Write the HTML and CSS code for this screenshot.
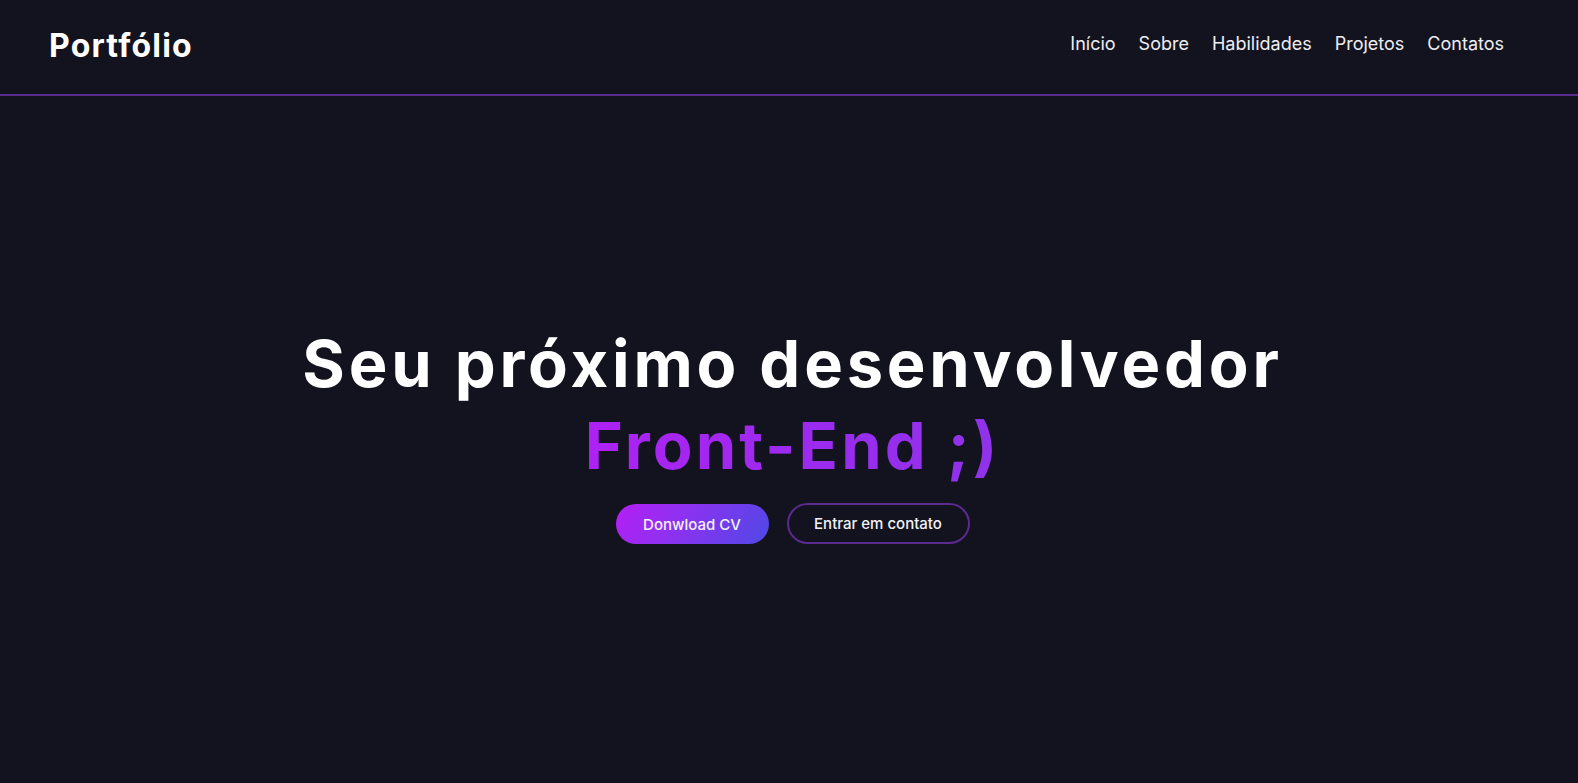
FILE: index.html
```html
<!DOCTYPE html>
<html lang="pt-BR">
<head>
<meta charset="utf-8">
<title>Portfólio</title>
<link rel="stylesheet" href="styles.css">
</head>
<body>
<header class="header">
  <a class="logo" href="#">Portfólio</a>
  <nav class="nav">
    <a href="#">Início</a>
    <a href="#">Sobre</a>
    <a href="#">Habilidades</a>
    <a href="#">Projetos</a>
    <a href="#">Contatos</a>
  </nav>
</header>
<main class="hero">
  <h1 class="title">Seu próximo desenvolvedor<br><span class="accent">Front-End ;)</span></h1>
  <div class="actions">
    <a class="btn btn-fill" href="#">Donwload CV</a>
    <a class="btn btn-outline" href="#">Entrar em contato</a>
  </div>
</main>
</body>
</html>
```

FILE: styles.css
```css
* { box-sizing: border-box; }
html, body { margin: 0; padding: 0; }
body {
  background: #13131f;
  color: #fff;
  font-family: "Inter", "Liberation Sans", sans-serif;
  min-height: 100vh;
}
a { text-decoration: none; color: inherit; }

.header {
  display: flex;
  justify-content: space-between;
  align-items: center;
  height: 96px;
  padding: 0 74px 0 49px;
  border-bottom: 2px solid #5b2a8f;
}
.logo {
  font-weight: 700;
  font-size: 32px;
  letter-spacing: 1.2px;
  color: #fff;
  margin-top: -4px;
}
.nav {
  display: flex;
  gap: 23px;
  margin-top: -8px;
}
.nav a {
  font-size: 18px;
  font-weight: 400;
  color: #eeeef2;
}

.hero {
  display: flex;
  flex-direction: column;
  align-items: center;
  padding-top: 227px;
  padding-left: 7px;
}
.title {
  margin: 0;
  text-align: center;
  font-size: 65px;
  line-height: 82px;
  font-weight: 700;
  letter-spacing: 3.8px;
}
.accent {
  letter-spacing: 3.1px;
  background: linear-gradient(90deg, #ad22f3 0%, #9a2cee 60%, #8f33ea 100%);
  -webkit-background-clip: text;
  background-clip: text;
  color: transparent;
}
.actions {
  display: flex;
  gap: 18px;
  margin-top: 17px;
}
.btn {
  display: inline-flex;
  align-items: center;
  justify-content: center;
  height: 40px;
  border-radius: 20px;
  font-size: 15px;
  font-weight: 500;
  color: #f2f2f6;
}
.btn-fill {
  width: 153px;
  background: linear-gradient(120deg, #b41ff5 0%, #8a33ef 45%, #4f48e6 100%);
}
.btn-outline {
  width: 183px;
  height: 41px;
  border: 2px solid #5a2a8e;
  border-radius: 21px;
  margin-top: -1px;
}
```
